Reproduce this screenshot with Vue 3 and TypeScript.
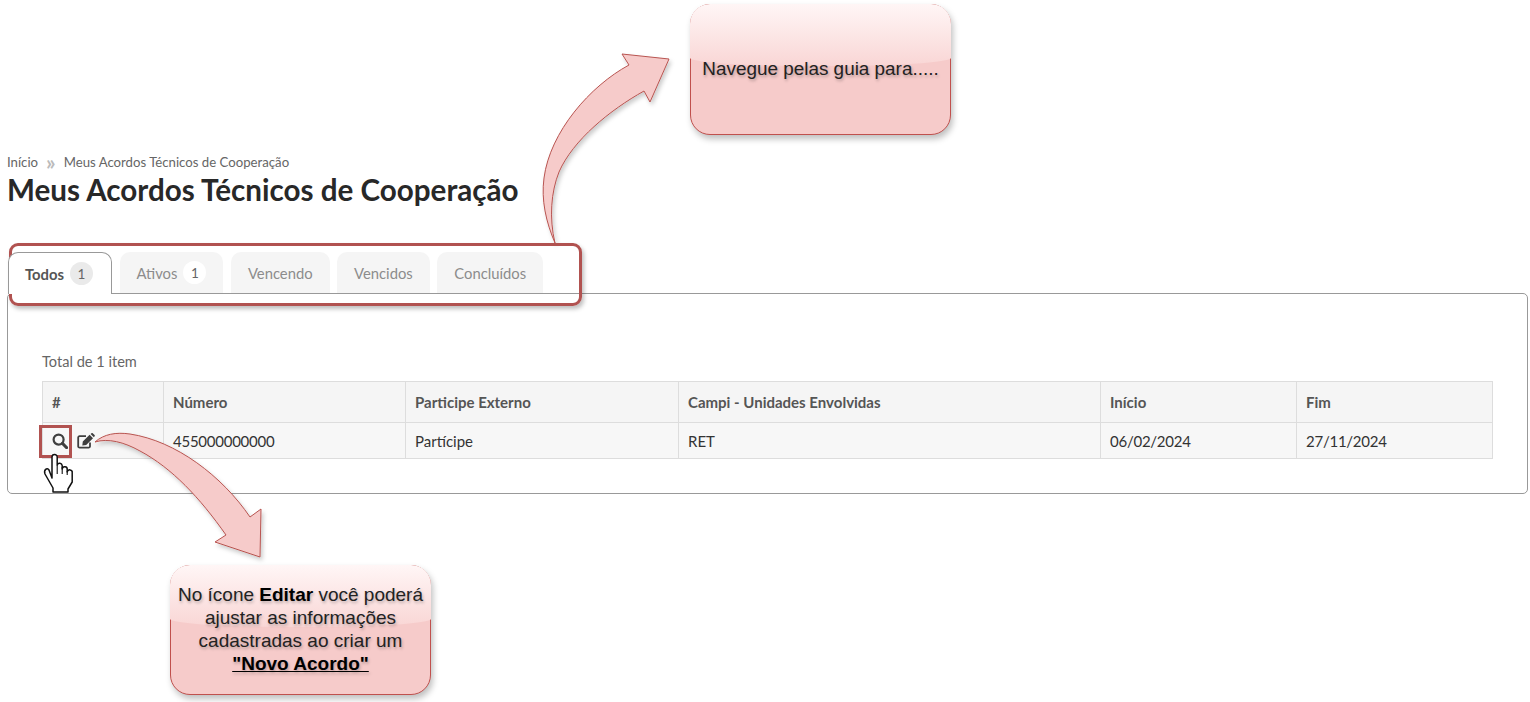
<script setup lang="ts">
interface Tab { label: string; count?: number; active?: boolean }
interface Cell { text: string; numeric?: boolean }
const tabs: Tab[] = [
  { label: 'Todos', count: 1, active: true },
  { label: 'Ativos', count: 1 },
  { label: 'Vencendo' },
  { label: 'Vencidos' },
  { label: 'Concluídos' },
]
const headers = ['#', 'Número', 'Participe Externo', 'Campi - Unidades Envolvidas', 'Início', 'Fim']
const cells: Cell[] = [
  { text: '455000000000', numeric: true },
  { text: 'Partícipe' },
  { text: 'RET' },
  { text: '06/02/2024', numeric: true },
  { text: '27/11/2024', numeric: true },
]
</script>

<template>
  <div class="page">
    <nav class="crumbs">
      <span>Início</span>
      <span class="sep">»</span>
      <span>Meus Acordos Técnicos de Cooperação</span>
    </nav>
    <h1 class="title">Meus Acordos Técnicos de Cooperação</h1>

    <ul class="tabs">
      <li v-for="t in tabs" :key="t.label" class="tab" :class="{ active: t.active }">
        <span>{{ t.label }}</span>
        <span v-if="t.count" class="badge">{{ t.count }}</span>
      </li>
    </ul>

    <section class="panel">
      <p class="total">Total de 1 item</p>
      <table class="grid">
        <colgroup>
          <col class="c0" /><col class="c1" /><col class="c2" /><col class="c3" /><col class="c4" /><col class="c5" />
        </colgroup>
        <thead>
          <tr><th v-for="h in headers" :key="h">{{ h }}</th></tr>
        </thead>
        <tbody>
          <tr>
            <td>
              <span class="icons">
                <svg viewBox="0 0 16 16" width="16" height="16">
                  <circle cx="6.6" cy="6.6" r="5" fill="none" stroke="#3f3f3f" stroke-width="2.2" />
                  <path d="M10.4 10.4 14.6 14.6" stroke="#3f3f3f" stroke-width="2.9" stroke-linecap="round" />
                </svg>
                <svg viewBox="0 0 18 16" width="18" height="16">
                  <path d="M13 9.500V13.200a1.400 1.400 0 0 1-1.400 1.400H2.600a1.400 1.400 0 0 1-1.400-1.400V4.600a1.400 1.400 0 0 1 1.400-1.400H9" fill="none" stroke="#3f3f3f" stroke-width="1.800" />
                  <path d="M5.800 8.600 12.600 1.800l3.400 3.400-6.800 6.800-3.900.6zM13.600.9l.9-.7c.4-.3.9-.3 1.200 0l1.900 1.900c.3.3.3.8 0 1.200l-.7.9z" fill="#3f3f3f" />
                </svg>
              </span>
            </td>
            <td v-for="c in cells" :key="c.text" :class="{ num: c.numeric }">{{ c.text }}</td>
          </tr>
        </tbody>
      </table>
    </section>

    <svg class="overlay" viewBox="0 0 1530 702" width="1530" height="702">
      <defs>
        <filter id="sh" x="-20%" y="-20%" width="140%" height="140%">
          <feDropShadow dx="2" dy="3" stdDeviation="2" flood-color="#000" flood-opacity="0.2" />
        </filter>
      </defs>
      <path class="arrow" filter="url(#sh)" d="M555 243C546 222 541 200 544 178C550 132 590 86 629 65L622 54L669 59L650 102L644 91C610 110 573 140 559 172C551 192 549 218 555 243Z" />
      <path class="arrow" filter="url(#sh)" d="M95 442C104 434 116 432 130 434C176 441 222 476 250 517L261 509L260 557L215 542L226 535C200 498 172 468 140 451C124 442 108 438 95 442Z" />
    </svg>

    <div class="box box-tabs"></div>
    <div class="box box-search"></div>

    <svg class="overlay" viewBox="0 0 1530 702" width="1530" height="702">
      <path class="hand" d="M52 478V457a2.600 2.600 0 0 1 5.200 0V465a2.600 2.600 0 0 1 5 .6V469a2.500 2.500 0 0 1 5 .6V472a2.500 2.500 0 0 1 5 .8V482L68 489V492H53V488L45 474C43.500 470 47 467 49 470Z" />
      <path class="hand-line" d="M57.200 465V474M62.200 467V474M67.200 471V475" />
    </svg>

    <aside class="note note-top"><p>Navegue pelas guia para.....</p></aside>
    <aside class="note note-bottom">
      <p>No ícone <b>Editar</b> você poderá ajustar as informações cadastradas ao criar um <b class="u">"Novo Acordo"</b></p>
    </aside>
  </div>
</template>

<style>
html, body { margin: 0; background: #fff; }
</style>

<style scoped>
.page {
  position: relative;
  width: 1530px;
  height: 702px;
  overflow: hidden;
  box-sizing: border-box;
  padding: 155px 2px 0 7px;
  font-family: Lato, "Open Sans", sans-serif;
  color: #333;
  background: #fff;
}
.crumbs { display: flex; align-items: center; gap: 6px; font-size: 13.200px; line-height: 15px; color: #666; }
.sep { color: #bbb; font-size: 21px; font-weight: 700; margin: -3px 2px 0; line-height: 15px; }
.title { margin: 2px 0 0; font-size: 29.600px; line-height: 36px; font-weight: 700; color: #282828; }
.tabs { display: flex; gap: 7.500px; list-style: none; margin: 44px 0 0; padding: 0 0 0 1px; position: relative; z-index: 1; }
.tab {
  display: flex; align-items: center; gap: 6px;
  height: 41px; padding: 0 17px; box-sizing: border-box;
  border-radius: 10px 10px 0 0; background: #f5f5f5;
  font-size: 14.800px; color: #8c8c8c;
}
.tab.active {
  background: #fff; border: 1px solid #999; border-bottom: 0;
  height: 42px; font-weight: 700; color: #555;
  margin: 0 0 -1px 0;
  padding: 0 18px 0 16px;
}
.badge {
  width: 23px; height: 23px; border-radius: 50%; background: #fff;
  display: flex; align-items: center; justify-content: center;
  font-weight: 400; font-size: 13.500px; color: #666;
}
.active .badge { background: #eaeaea; }
.panel {
  height: 201px; box-sizing: border-box;
  border: 1px solid #999; border-radius: 5px;
  padding: 59px 34px 0;
}
.total { margin: 0 0 10px; font-size: 14.600px; line-height: 18px; color: #666; }
.grid { width: 1450px; table-layout: fixed; border-collapse: collapse; font-size: 15px; background: #f7f7f7; }
.c0 { width: 121px; } .c1 { width: 242px; } .c2 { width: 273px; } .c3 { width: 422px; } .c4 { width: 196px; } .c5 { width: 196px; }
th, td { border: 1px solid #ddd; padding: 0 9px; text-align: left; box-sizing: border-box; }
th { height: 41px; background: #f5f5f5; font-weight: 700; color: #555; }
td { height: 36px; color: #333; }
.num { letter-spacing: -0.250px; }
.icons { display: flex; align-items: center; gap: 9px; padding-top: 1px; }
.overlay { position: absolute; left: 0; top: 0; pointer-events: none; }
.arrow { fill: #f6cbca; stroke: #b85450; stroke-width: 1; }
.hand { fill: #fff; stroke: #111; stroke-width: 1.500; stroke-linejoin: round; }
.hand-line { fill: none; stroke: #111; stroke-width: 1.100; }
.box { position: absolute; box-sizing: border-box; border: 3px solid #b15250; }
.box-tabs { left: 9px; top: 243px; width: 573px; height: 63px; border-radius: 9px; box-shadow: 2px 3px 4px rgba(0,0,0,.25); }
.box-search { left: 39px; top: 425px; width: 33px; height: 33px; }
.note {
  position: absolute; box-sizing: border-box; width: 261px; height: 131px;
  border: 1px solid #c0504d; border-radius: 20px;
  background: #f6cbca;
  box-shadow: 2px 4px 6px rgba(0,0,0,.25);
  display: flex; align-items: center; justify-content: center; text-align: center;
  font-family: "Liberation Sans", Arial, sans-serif; color: #222;
  text-shadow: 1px 2px 3px rgba(0,0,0,.25);
}
.note::before {
  content: ""; position: absolute; left: -1px; right: -1px; top: -1px; height: 62px;
  border-radius: 20px 20px 130px 130px / 20px 20px 8px 8px;
  background: linear-gradient(to bottom, #fff6f6 0%, #f9d6d5 100%);
}
.note p { position: relative; margin: 0; }
.note-top { left: 690px; top: 4px; font-size: 18.900px; align-items: flex-start; padding-top: 53px; }
.note-bottom { left: 170px; top: 565px; height: 130px; font-size: 19px; line-height: 23px; padding: 0 2px 2px; }
.note-bottom b { color: #000; }
.u { text-decoration: underline; }
</style>
